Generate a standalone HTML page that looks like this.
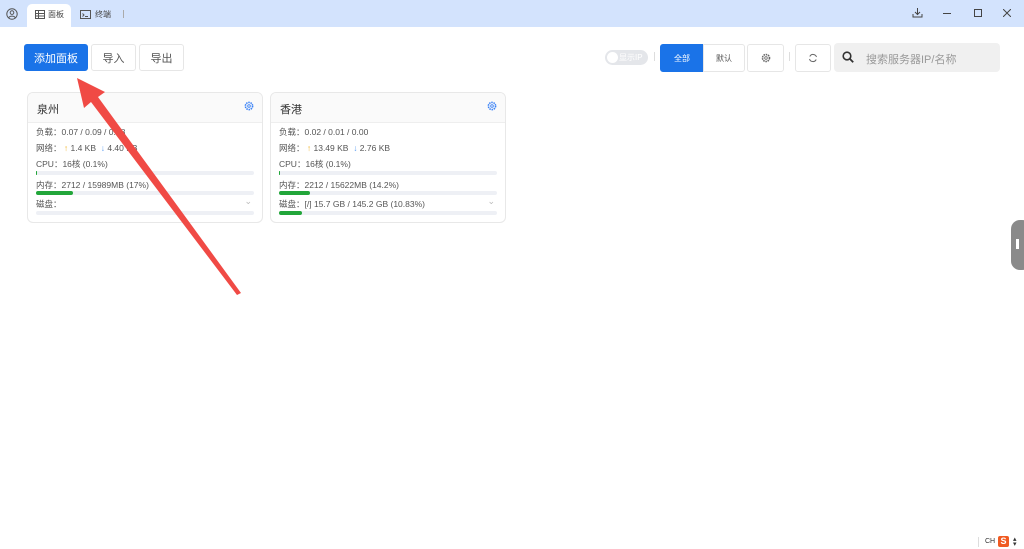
<!DOCTYPE html><html><head><meta charset="utf-8"><style>
*{margin:0;padding:0;box-sizing:border-box}
body{width:1024px;height:549px;background:#fff;font-family:"Liberation Sans","Noto Sans CJK SC",sans-serif;position:relative;overflow:hidden;color:#333}
.a{position:absolute}
.tb{left:0;top:0;width:1024px;height:27px;background:#d3e3fd}
.btn{position:absolute;border:1px solid #e6e6e6;border-radius:3px;font-size:11px;color:#555;display:flex;align-items:center;justify-content:center;background:#fff}
.card{position:absolute;top:92px;width:236px;height:131px;border:1px solid #e8e8e8;border-radius:6px;overflow:hidden;font-size:8.5px;color:#555}
.card .h{height:30px;background:#fafafa;border-bottom:1px solid #eee;font-size:11px;color:#333;padding:8px 0 0 9px;position:relative}
.r{position:absolute;left:8px}
.bar{position:absolute;left:8px;width:218px;height:4px;border-radius:2px;background:#eef0f5}
.bar i{display:block;height:4px;border-radius:2px;background:#22a63a}
</style></head><body>
<div class="a tb"></div>
<svg class="a" style="left:6px;top:8px" width="12" height="12" viewBox="0 0 12 12"><circle cx="6" cy="6" r="5.2" fill="none" stroke="#555" stroke-width="1"/><circle cx="6" cy="4.6" r="1.8" fill="none" stroke="#555"/><path d="M2.8 9.6c1-2 5.4-2 6.4 0" fill="none" stroke="#555"/></svg>
<div class="a" style="left:27px;top:4px;width:44px;height:23px;background:#fff;border-radius:5px 5px 0 0"></div>
<svg class="a" style="left:35px;top:10px" width="10" height="9"><rect x=".5" y=".5" width="9" height="8" fill="none" stroke="#555"/><path d="M.5 3.5h9M.5 6h9M3.5 .5v8" stroke="#555"/></svg>
<div class="a" style="left:48px;top:9px;font-size:8px;color:#444">面板</div>
<svg class="a" style="left:80px;top:10px" width="11" height="9"><rect x=".5" y=".5" width="10" height="8" fill="none" stroke="#555"/><path d="M2.5 3.5l1.5 1.5-1.5 1.5M5 6.5h3" stroke="#555" fill="none"/></svg>
<div class="a" style="left:95px;top:9px;font-size:8px;color:#444">终端</div>
<div class="a" style="left:123px;top:10px;width:1px;height:8px;background:#aaa"></div>
<svg class="a" style="left:912px;top:7px" width="11" height="11"><path d="M5.5 1v6M3 5l2.5 2.5L8 5M1 7v3h9V7" fill="none" stroke="#444"/></svg>
<div class="a" style="left:943px;top:13px;width:8px;height:1px;background:#444"></div>
<div class="a" style="left:974px;top:9px;width:8px;height:8px;border:1px solid #444"></div>
<svg class="a" style="left:1003px;top:9px" width="8" height="8"><path d="M0 0l8 8M8 0L0 8" stroke="#444"/></svg>

<div class="btn" style="left:24px;top:44px;width:64px;height:27px;background:#1a73e8;color:#fff;border-color:#1a73e8">添加面板</div>
<div class="btn" style="left:91px;top:44px;width:45px;height:27px">导入</div>
<div class="btn" style="left:139px;top:44px;width:45px;height:27px">导出</div>

<div class="a" style="left:605px;top:50px;width:43px;height:15px;border-radius:8px;background:#e4e6ea"></div>
<div class="a" style="left:607px;top:52px;width:11px;height:11px;border-radius:50%;background:#fff"></div>
<div class="a" style="left:619px;top:52px;font-size:8px;color:#fff">显示IP</div>
<div class="a" style="left:654px;top:52px;width:1px;height:9px;background:#ddd"></div>
<div class="btn" style="left:660px;top:44px;width:44px;height:28px;background:#1a73e8;color:#fff;border-color:#1a73e8;font-size:8px;border-radius:3px 0 0 3px">全部</div>
<div class="btn" style="left:703px;top:44px;width:42px;height:28px;font-size:8px;border-radius:0 3px 3px 0">默认</div>
<div class="btn" style="left:747px;top:44px;width:37px;height:28px"><svg width="10" height="10" viewBox="0 0 10 10"><circle cx="5" cy="5" r="3.5" fill="none" stroke="#666" stroke-dasharray="1.5 0.8" stroke-width="1.6"/><circle cx="5" cy="5" r="1.3" fill="none" stroke="#666" stroke-width=".8"/></svg></div>
<div class="a" style="left:789px;top:52px;width:1px;height:9px;background:#ddd"></div>
<div class="btn" style="left:795px;top:44px;width:36px;height:28px"><svg width="10" height="10"><path d="M8.5 4A3.6 3.6 0 0 0 1.8 3.5M1.5 6a3.6 3.6 0 0 0 6.7.5" fill="none" stroke="#666"/></svg></div>
<div class="a" style="left:834px;top:43px;width:166px;height:29px;background:#f0f0f0;border-radius:4px"></div>
<svg class="a" style="left:842px;top:51px" width="12" height="12"><circle cx="5" cy="5" r="3.8" fill="none" stroke="#333" stroke-width="1.6"/><path d="M8 8l3.2 3.2" stroke="#333" stroke-width="1.8"/></svg>
<div class="a" style="left:866px;top:51px;font-size:11px;color:#999">搜索服务器IP/名称</div>

<div class="card" style="left:27px"><div class="h">泉州<svg class="a" style="right:8px;top:8px" width="10" height="10" viewBox="0 0 10 10"><circle cx="5" cy="5" r="3.6" fill="none" stroke="#3b82f6" stroke-dasharray="1.5 .8" stroke-width="1.6"/><circle cx="5" cy="5" r="1.3" fill="none" stroke="#3b82f6" stroke-width=".9"/></svg></div>
<div class="r" style="top:33px">负载：0.07 / 0.09 / 0.08</div>
<div class="r" style="top:49px">网络： <span style="color:#f0b429">↑</span> 1.4 KB &nbsp;<span style="color:#5b9cf0">↓</span> 4.40 KB</div>
<div class="r" style="top:65px">CPU：16核 (0.1%)</div>
<div class="bar" style="top:78px"><i style="width:1px"></i></div>
<div class="r" style="top:86px">内存：2712 / 15989MB (17%)</div>
<div class="bar" style="top:98px"><i style="width:37px"></i></div>
<div class="r" style="top:105px">磁盘：</div>
<div class="a" style="right:10px;top:103px;color:#bbb;font-size:9px">⌄</div>
<div class="bar" style="top:118px"></div></div>

<div class="card" style="left:270px"><div class="h">香港<svg class="a" style="right:8px;top:8px" width="10" height="10" viewBox="0 0 10 10"><circle cx="5" cy="5" r="3.6" fill="none" stroke="#3b82f6" stroke-dasharray="1.5 .8" stroke-width="1.6"/><circle cx="5" cy="5" r="1.3" fill="none" stroke="#3b82f6" stroke-width=".9"/></svg></div>
<div class="r" style="top:33px">负载：0.02 / 0.01 / 0.00</div>
<div class="r" style="top:49px">网络： <span style="color:#f0b429">↑</span> 13.49 KB &nbsp;<span style="color:#5b9cf0">↓</span> 2.76 KB</div>
<div class="r" style="top:65px">CPU：16核 (0.1%)</div>
<div class="bar" style="top:78px"><i style="width:1px"></i></div>
<div class="r" style="top:86px">内存：2212 / 15622MB (14.2%)</div>
<div class="bar" style="top:98px"><i style="width:31px"></i></div>
<div class="r" style="top:105px">磁盘：[/] 15.7 GB / 145.2 GB (10.83%)</div>
<div class="a" style="right:10px;top:103px;color:#bbb;font-size:9px">⌄</div>
<div class="bar" style="top:118px"><i style="width:23px"></i></div></div>

<svg class="a" style="left:0;top:0" width="300" height="300"><polygon points="77,78 105,92 98,97 241,293 237,295 91,102 84,108" fill="#f04a45"/></svg>

<div class="a" style="left:1011px;top:220px;width:20px;height:50px;border-radius:9px;background:#8a8a8a"></div>
<div class="a" style="left:1016px;top:239px;width:3px;height:10px;background:#fff"></div>
<div class="a" style="left:978px;top:537px;width:1px;height:10px;background:#ddd"></div>
<div class="a" style="left:985px;top:538px;font-size:7px;color:#333">CH</div>
<div class="a" style="left:998px;top:536px;width:11px;height:11px;background:#f05a22;border-radius:2px;color:#fff;font-size:9px;line-height:11px;text-align:center;font-weight:bold">S</div>
<div class="a" style="left:1013px;top:537px;font-size:7px;color:#333;line-height:5px">▴<br>▾</div>
</body></html>
